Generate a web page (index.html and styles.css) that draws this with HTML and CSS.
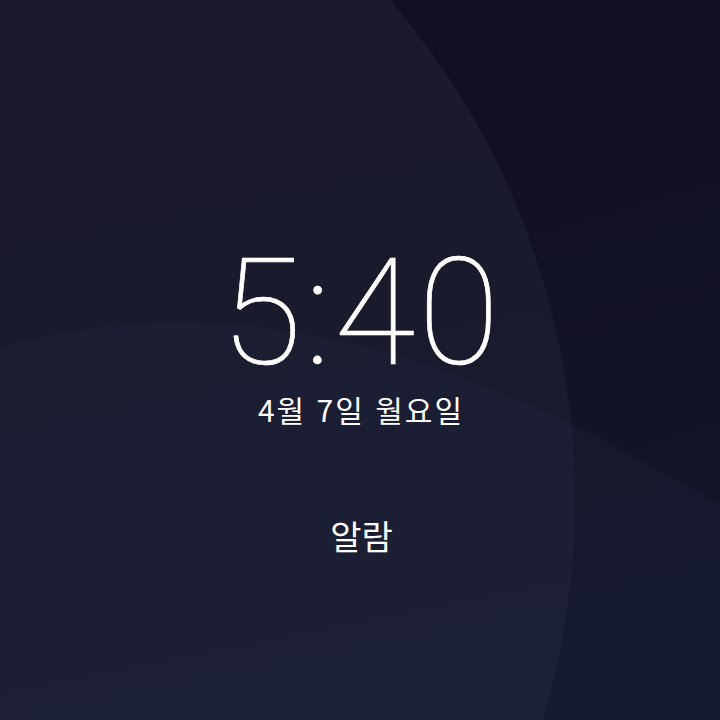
FILE: index.html
```html
<!DOCTYPE html>
<html lang="ko">
<head>
<meta charset="utf-8">
<title>Lock screen</title>
<link rel="stylesheet" href="styles.css">
</head>
<body>
<main class="screen">
  <svg class="wallpaper" viewBox="0 0 720 720" preserveAspectRatio="none" aria-hidden="true">
    <defs>
      <linearGradient id="base" x1="0" y1="0" x2="0.3" y2="1">
        <stop offset="0" stop-color="#100d1f"/>
        <stop offset="1" stop-color="#131628"/>
      </linearGradient>
      <linearGradient id="disc" x1="0" y1="0" x2="0.2" y2="1">
        <stop offset="0" stop-color="#1a192a"/>
        <stop offset="0.5" stop-color="#191a2c"/>
        <stop offset="1" stop-color="#1c2033"/>
      </linearGradient>
    </defs>
    <rect width="720" height="720" fill="url(#base)"/>
    <circle cx="-193" cy="500" r="768" fill="url(#disc)"/>
    <path d="M0,348 C160,300 380,300 720,505 L720,720 L0,720 Z" fill="#2a3050" fill-opacity="0.16"/>
  </svg>
  <section class="clock-block">
    <div class="time">5:40</div>
    <div class="date">4월 7일 월요일</div>
  </section>
  <div class="alarm">알람</div>
</main>
</body>
</html>
```

FILE: styles.css
```css
html, body {
  margin: 0;
  padding: 0;
  background: #15142a;
}
.screen {
  position: relative;
  width: 720px;
  height: 720px;
  overflow: hidden;
  display: flex;
  flex-direction: column;
  align-items: center;
  color: #ffffff;
}
.wallpaper {
  position: absolute;
  left: 0;
  top: 0;
  width: 720px;
  height: 720px;
  z-index: 0;
}
.clock-block {
  position: relative;
  z-index: 1;
  display: flex;
  flex-direction: column;
  align-items: center;
  padding-top: 240px;
}
.time {
  font-family: Roboto, "Liberation Sans", sans-serif;
  font-weight: 100;
  font-size: 148px;
  line-height: 148px;
  letter-spacing: 3px;
  padding-left: 3px;
  -webkit-text-stroke: 0.7px #ffffff;
}
.date {
  font-family: "Noto Sans CJK KR", "Noto Sans", sans-serif;
  font-size: 30px;
  line-height: 36px;
  letter-spacing: 2px;
  padding-left: 2px;
  margin-top: 3px;
}
.alarm {
  position: relative;
  z-index: 1;
  margin-top: 87px;
  font-family: "Noto Sans CJK KR", "Noto Sans", sans-serif;
  font-size: 34px;
  line-height: 44px;
  padding-left: 3px;
}
```
